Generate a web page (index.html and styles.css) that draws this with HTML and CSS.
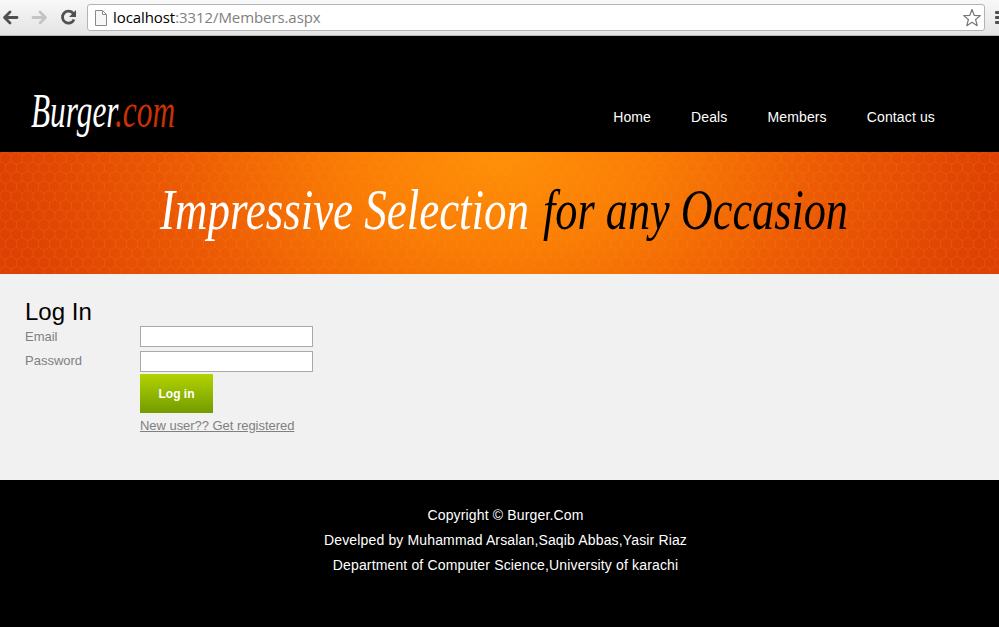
FILE: index.html
```html
<!DOCTYPE html>
<html lang="en">
<head>
<meta charset="utf-8">
<title>Burger.com - Members</title>
<link rel="stylesheet" href="styles.css">
</head>
<body>
<div class="toolbar">
  <svg class="nav-icons" width="87" height="35" viewBox="0 0 87 35" fill="none">
    <path d="M17 17.500H5M10 12L4.500 17.500L10 23" stroke="#505050" stroke-width="2.800" stroke-linecap="round" stroke-linejoin="round"/>
    <path d="M33 17.500H45M40 12L45.500 17.500L40 23" stroke="#c4c4c4" stroke-width="2.800" stroke-linecap="round" stroke-linejoin="round"/>
    <path d="M73.300 13.500A6 6 0 1 0 74 19.500" stroke="#505050" stroke-width="2.800"/>
    <path d="M76 10V17H69Z" fill="#505050"/>
  </svg>
  <div class="address">
    <svg width="13" height="16" viewBox="0 0 13 16"><path d="M.5 .5H7.500L11.500 4.500V15.500H.5V.5ZM7.500 .5V4.500H11.500" fill="#f7f7f7" stroke="#8a8a8a"/></svg>
    <span class="url"><b>localhost</b>:3312/Members.aspx</span>
    <svg class="star" width="20" height="20" viewBox="0 0 20 20"><path d="M10 1.500L12.200 7.300L18.300 7.600L13.600 11.500L15.200 17.700L10 14.300L4.800 17.700L6.400 11.500L1.700 7.600L7.800 7.300Z" fill="#fff" stroke="#777" stroke-width="1.200" stroke-linejoin="round"/></svg>
  </div>
  <div class="menu"><i></i><i></i><i></i></div>
</div>
<header>
  <svg class="logo" width="160" height="62" viewBox="0 0 160 62">
    <text x="3" y="38" textLength="144" lengthAdjust="spacingAndGlyphs">Burger<tspan class="red">.com</tspan></text>
  </svg>
  <nav><a>Home</a><a>Deals</a><a>Members</a><a>Contact us</a></nav>
</header>
<section class="banner">
  <svg width="999" height="122" viewBox="0 0 999 122">
    <defs>
      <pattern id="hex" width="11" height="19" patternUnits="userSpaceOnUse">
        <path d="M5.500 0L11 3.200V9.500L5.500 12.700L0 9.500V3.200ZM5.500 12.700V19" fill="none" stroke="#ffa020" stroke-opacity=".15"/>
      </pattern>
    </defs>
    <rect width="999" height="122" fill="url(#hex)"/>
    <text x="160" y="77" textLength="369" lengthAdjust="spacingAndGlyphs">Impressive Selection</text>
    <text class="dark" x="543" y="77" textLength="305" lengthAdjust="spacingAndGlyphs">for any Occasion</text>
  </svg>
</section>
<main>
  <h1>Log In</h1>
  <form>
    <label for="email">Email</label><input id="email" type="text">
    <label for="password">Password</label><input id="password" type="password">
    <button type="button">Log in</button>
    <a class="register">New user?? Get registered</a>
  </form>
</main>
<footer>
  <p>Copyright © Burger.Com</p>
  <p>Develped by Muhammad Arsalan,Saqib Abbas,Yasir Riaz</p>
  <p>Department of Computer Science,University of karachi</p>
</footer>
</body>
</html>
```
FILE: styles.css
```css
* { box-sizing: border-box; }
body { margin: 0; height: 627px; overflow: hidden; display: flex; flex-direction: column; background: #000; font-family: "Liberation Sans", Arial, sans-serif; }
.toolbar { height: 36px; flex: none; display: flex; background: linear-gradient(#f8f8f8, #e4e4e4); border-bottom: 1px solid #b5b5b5; overflow: hidden; }
.nav-icons { flex: none; }
.address { width: 898px; height: 27px; margin-top: 4px; flex: none; display: flex; align-items: center; padding: 0 2px 0 7px; background: #fff; border: 1px solid #b4b4b4; border-radius: 3px; }
.url { margin-left: 5px; font: 15px/24px "Open Sans", "Noto Sans", sans-serif; letter-spacing: -.08px; color: #808080; white-space: nowrap; position: relative; top: -1px; }
.url b { font-weight: 400; color: #000; }
.star { margin-left: auto; }
.menu { margin: 11px 0 0 10px; width: 16px; flex: none; display: flex; flex-direction: column; gap: 2px; }
.menu i { height: 3px; background: #505050; border-radius: 1px; }
header { height: 116px; flex: none; display: flex; justify-content: space-between; background: #000; }
.logo { margin: 53px 0 0 28px; overflow: visible; font: italic 48px "Liberation Serif", serif; fill: #fff; }
.logo .red { fill: #cc3100; }
nav { display: flex; gap: 40px; margin: 73px 64px 0 0; color: #fff; font-size: 14px; line-height: 16px; letter-spacing: .13px; }
.banner { height: 122px; flex: none; background: radial-gradient(ellipse 500px 330px at 500px 0, #ff9008 0%, #fa7d05 30%, #ec5a04 65%, #de4103 100%); font: italic 58px "Liberation Serif", serif; }
.banner svg { display: block; fill: #fff; }
.banner .dark { fill: #000; }
main { height: 206px; flex: none; padding: 24px 25px; background: #f1f1f1; }
h1 { margin: 0; font-size: 24px; line-height: 28px; font-weight: 400; color: #000; }
form { display: grid; grid-template-columns: 115px 173px; color: #808080; font-size: 13px; }
label { height: 24px; line-height: 21px; }
input { width: 173px; height: 21px; margin: 0; padding: 1px; border: 1px solid #a9a9a9; background: #fff; }
#password { margin-top: 1px; }
button { grid-column: 2; width: 73px; height: 39px; padding: 0; border: 0; background: linear-gradient(#b2d300, #739c00); color: #fff; font: bold 12px "Liberation Sans", Arial, sans-serif; }
.register { grid-column: 2; margin-top: 5px; line-height: 16px; letter-spacing: -.04px; text-decoration: underline; white-space: nowrap; }
footer { flex: 1; padding: 23px 0 0 12px; background: #000; color: #fff; font-size: 14px; line-height: 25px; letter-spacing: .15px; text-align: center; }
footer p { margin: 0; }
```
